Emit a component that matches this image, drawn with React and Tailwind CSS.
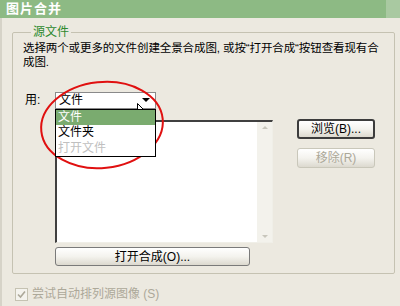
import React from 'react';

const font = { fontFamily: '"Liberation Sans", "Noto Sans CJK SC", sans-serif' };

function XpButton({ children, disabled, focused, className = '' }) {
  return (
    <div
      className={`flex items-center justify-center rounded-[3px] border text-[12px] leading-none bg-gradient-to-b from-white via-[#f4f3ee] to-[#dcd9cf] ${
        disabled ? 'border-[#c9c7ba] text-[#aca899]' : focused ? 'border-[#3c3c3c] text-black' : 'border-[#7a7a7a] text-black'
      } ${className}`}
    >
      {children}
    </div>
  );
}

export default function App() {
  return (
    <div className="relative w-[400px] h-[306px] overflow-hidden bg-[#ece9e0] text-black" style={font}>
      {/* title bar */}
      <div className="h-[18px] bg-[#8dba84] flex items-center pl-[6px] text-white text-[13px] font-bold tracking-[1px]">
        图片合并
        <div className="ml-auto w-[14px] h-full bg-[#a9c9a1]" />
      </div>

      <div className="h-[288px] border-l-2 border-[#d6d3c8] flex flex-col">
        <fieldset className="ml-[10px] mr-[5px] mt-[8px] border border-[#c5c2b2] rounded-[2px] pl-[10px] pr-[10px] pb-[7px]">
          <legend className="ml-[8px] px-[2px] text-[12px] leading-[13px] text-[#2e8a2e]">源文件</legend>
          <p className="text-[11.5px] leading-[14px] pt-[2px] tracking-[-0.1px]">
            选择两个或更多的文件创建全景合成图, 或按“打开合成“按钮查看现有合成图.
          </p>

          <div className="mt-[22px] flex items-center">
            <span className="ml-[2px] w-[30px] text-[12px]">用:</span>
            <div className="relative w-[101px] h-[17px] bg-white border border-[#8a8a8a] flex items-center pl-[3px] text-[12px]">
              文件
              <div className="ml-auto mr-[5px] w-0 h-0 border-l-[4px] border-r-[4px] border-t-[4px] border-l-transparent border-r-transparent border-t-black" />
              <div className="absolute z-10 left-[-1px] top-[16px] w-[101px] bg-white border border-black text-[12px] leading-[15.5px]">
                <div className="bg-[#7aab6f] text-white pl-[2px]">文件</div>
                <div className="pl-[2px]">文件夹</div>
                <div className="pl-[2px] text-[#c0c0c0]">打开文件</div>
              </div>
            </div>
          </div>

          <div className="mt-[11px] flex items-start ml-[32px]">
            <div className="w-[218px] h-[123px] bg-white border-t-2 border-l-2 border-t-[#404040] border-l-[#404040] border-r border-b border-r-[#f0efe8] border-b-[#f0efe8] flex justify-end">
              <div className="w-[15px] h-full bg-[#f3f2ec] flex flex-col items-center justify-between py-[4px]">
                <div className="w-0 h-0 border-l-[3px] border-r-[3px] border-b-[3px] border-l-transparent border-r-transparent border-b-[#c8c6bc]" />
                <div className="w-0 h-0 border-l-[3px] border-r-[3px] border-t-[3px] border-l-transparent border-r-transparent border-t-[#c8c6bc]" />
              </div>
            </div>
            <div className="ml-[24px] -mt-[1px] flex flex-col gap-[9px]">
              <XpButton focused className="w-[78px] h-[20px] border-2">浏览(B)...</XpButton>
              <XpButton disabled className="w-[78px] h-[20px]">移除(R)</XpButton>
            </div>
          </div>

          <XpButton className="ml-[32px] mt-[4px] w-[195px] h-[19px]">打开合成(O)...</XpButton>
        </fieldset>

        <div className="mt-[11px] ml-[13px] flex items-center gap-[4px] text-[12px] text-[#aca899]">
          <div className="w-[13px] h-[13px] border border-[#c5c2b2] bg-[#f4f3ee] flex items-center justify-center">
            <svg width="9" height="9" viewBox="0 0 9 9">
              <path d="M1 4.5 L3.5 7 L8 1.5" fill="none" stroke="#aca899" strokeWidth="1.6" />
            </svg>
          </div>
          尝试自动排列源图像 (S)
        </div>
      </div>

      {/* red annotation ellipse */}
      <svg className="absolute left-0 top-0 pointer-events-none" width="400" height="306">
        <ellipse cx="102" cy="125" rx="61" ry="43" transform="rotate(-6 102 125)" fill="none" stroke="#e01010" strokeWidth="2" />
      </svg>

      {/* mouse cursor */}
      <svg className="absolute left-[137px] top-[103px]" width="13" height="20" viewBox="0 0 13 20">
        <path d="M0.5 0.5 L0.5 16 L4 12.5 L6.5 18.5 L9 17.5 L6.5 11.5 L11.5 11.5 Z" fill="white" stroke="black" strokeWidth="1" />
      </svg>
    </div>
  );
}
